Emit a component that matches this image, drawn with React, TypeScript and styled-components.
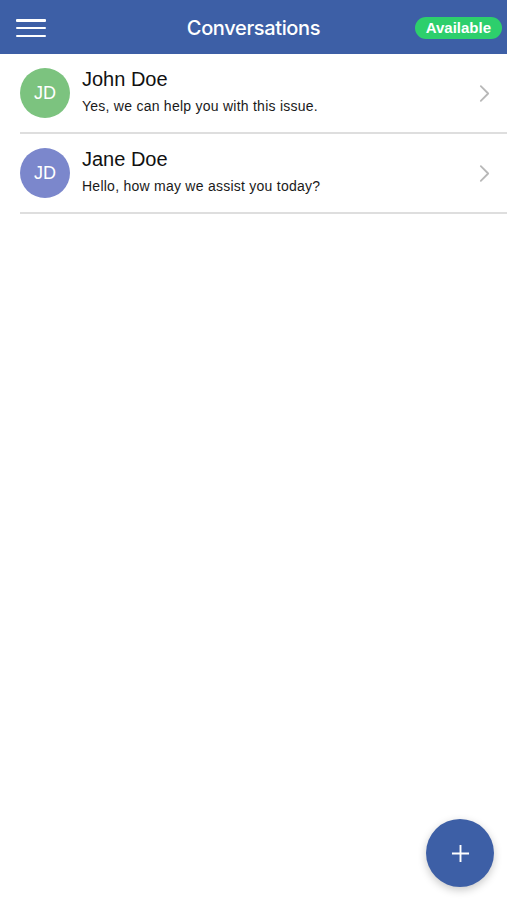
import styled, { createGlobalStyle } from "styled-components";

const GlobalStyle = createGlobalStyle`
  html, body {
    margin: 0;
    padding: 0;
    background: #ffffff;
    font-family: "Liberation Sans", Arial, sans-serif;
  }
  #root {
    min-height: 100vh;
  }
`;

type Conversation = {
  id: number;
  name: string;
  initials: string;
  message: string;
  color: string;
};

const conversations: Conversation[] = [
  {
    id: 1,
    name: "John Doe",
    initials: "JD",
    message: "Yes, we can help you with this issue.",
    color: "#7cc37f",
  },
  {
    id: 2,
    name: "Jane Doe",
    initials: "JD",
    message: "Hello, how may we assist you today?",
    color: "#7b87cc",
  },
];

export default function App() {
  return (
    <Page>
      <GlobalStyle />
      <Header>
        <MenuButton aria-label="menu">
          <span />
          <span />
          <span />
        </MenuButton>
        <Title>Conversations</Title>
        <StatusPill>Available</StatusPill>
      </Header>
      <List>
        {conversations.map((c) => (
          <Row key={c.id}>
            <Avatar $color={c.color}>{c.initials}</Avatar>
            <Body>
              <Name>{c.name}</Name>
              <Preview>{c.message}</Preview>
            </Body>
            <Chevron viewBox="0 0 12 20" width="11" height="19">
              <path
                d="M2 2 L10 10 L2 18"
                fill="none"
                stroke="#b8b8b8"
                strokeWidth="2"
                strokeLinecap="round"
                strokeLinejoin="round"
              />
            </Chevron>
          </Row>
        ))}
      </List>
      <Fab aria-label="new conversation">
        <svg viewBox="0 0 20 20" width="19" height="19">
          <path d="M10 1 V19 M1 10 H19" stroke="#ffffff" strokeWidth="2" />
        </svg>
      </Fab>
    </Page>
  );
}

const Page = styled.div`
  position: relative;
  min-height: 100vh;
  background: #ffffff;
`;

const Header = styled.header`
  display: grid;
  grid-template-columns: 1fr auto 1fr;
  align-items: center;
  height: 54px;
  padding: 0 5px;
  background: #3d5fa6;
  box-sizing: border-box;
`;

const MenuButton = styled.button`
  display: flex;
  flex-direction: column;
  justify-content: space-between;
  width: 30px;
  height: 18px;
  padding: 0;
  margin: 2px 0 0 11px;
  border: none;
  background: transparent;
  justify-self: start;
  span {
    display: block;
    height: 2.5px;
    background: #ffffff;
    border-radius: 1px;
  }
`;

const Title = styled.h1`
  margin: 0 0 -2px;
  color: #ffffff;
  font-family: Inter, "Liberation Sans", sans-serif;
  font-size: 20px;
  font-weight: 500;
  letter-spacing: -0.35px;
`;

const StatusPill = styled.div`
  justify-self: end;
  margin-top: 1px;
  padding: 2px 11px 3px;
  border-radius: 12px;
  background: #2dcf6c;
  color: #ffffff;
  font-size: 15px;
  font-weight: 700;
`;

const List = styled.div`
  display: flex;
  flex-direction: column;
`;

const Row = styled.div`
  display: flex;
  align-items: center;
  gap: 12px;
  height: 80px;
  margin-left: 20px;
  padding-right: 17px;
  border-bottom: 2px solid #dedede;
  box-sizing: border-box;
`;

const Avatar = styled.div<{ $color: string }>`
  display: flex;
  align-items: center;
  justify-content: center;
  flex: none;
  width: 50px;
  height: 50px;
  border-radius: 50%;
  background: ${(p) => p.$color};
  color: #ffffff;
  font-size: 18px;
`;

const Body = styled.div`
  display: flex;
  flex-direction: column;
  gap: 7px;
  flex: 1;
  min-width: 0;
  margin-top: -4px;
`;

const Name = styled.div`
  color: #111111;
  font-size: 20px;
`;

const Preview = styled.div`
  color: #1a1a1a;
  font-size: 14px;
  letter-spacing: 0.25px;
`;

const Chevron = styled.svg`
  flex: none;
`;

const Fab = styled.button`
  position: absolute;
  right: 13px;
  top: 819px;
  display: flex;
  align-items: center;
  justify-content: center;
  width: 68px;
  height: 68px;
  border: none;
  border-radius: 50%;
  background: #3d5fa6;
  box-shadow: 0 3px 8px rgba(0, 0, 0, 0.22);
`;
